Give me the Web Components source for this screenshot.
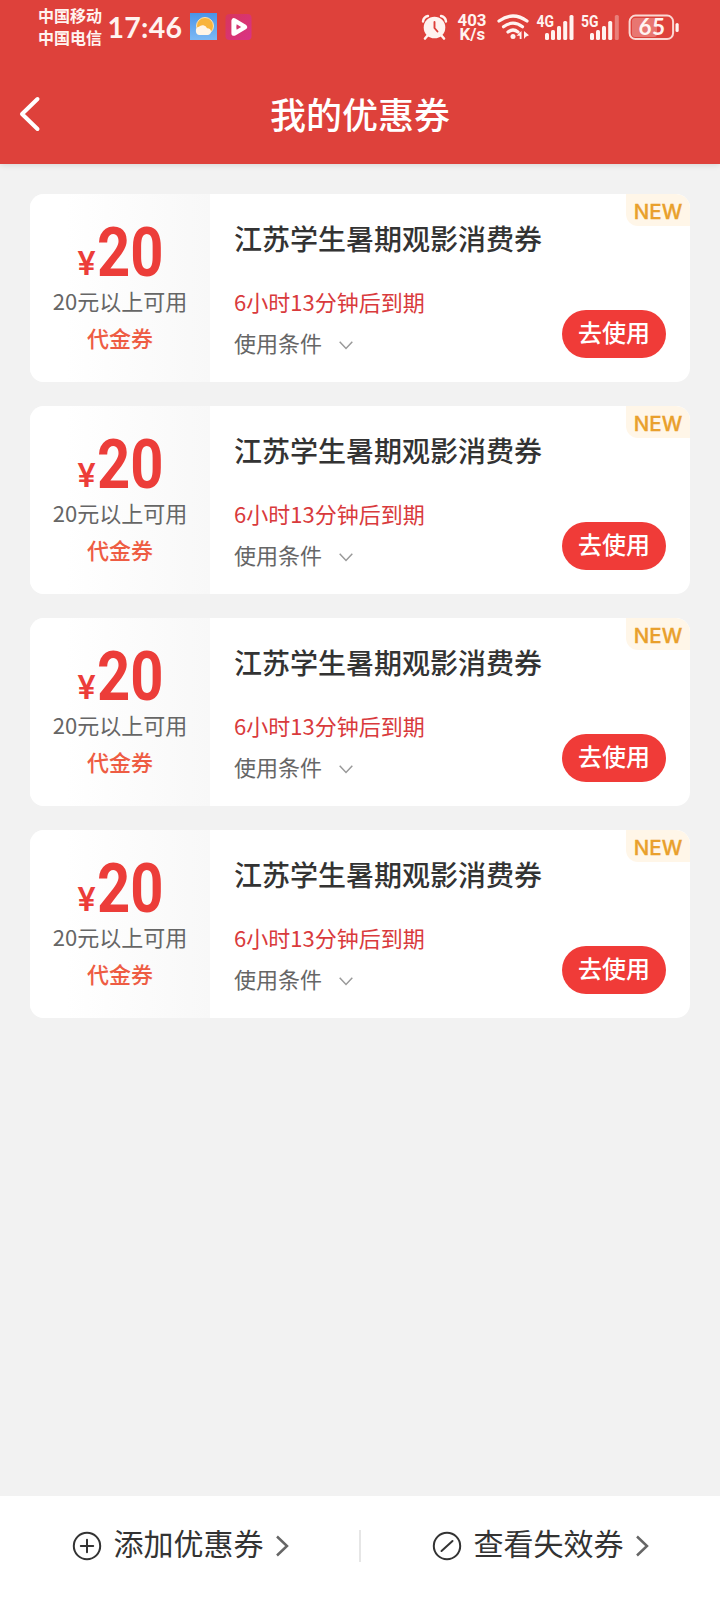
<!DOCTYPE html>
<html lang="zh-CN">
<head>
<meta charset="utf-8">
<title>我的优惠券</title>
<style>
html,body{margin:0;padding:0}
body{background:#f2f2f2;font-family:"Noto Sans CJK SC","Noto Sans",sans-serif;color:#333}
</style>
</head>
<body>
<coupon-page></coupon-page>
<script>
const define=(name,html,setup)=>customElements.define(name,class extends HTMLElement{
  constructor(){super();this.attachShadow({mode:'open'}).innerHTML=html;if(setup)setup(this.shadowRoot,this);}
});

define('status-bar',`
<style>
:host{display:flex;height:54px;color:#fff3f0;box-sizing:border-box;padding-left:38px}
svg{display:block;flex:none}
.carriers{width:66px;font-size:16px;font-weight:700;line-height:22px;padding-top:4px;white-space:nowrap}
text{fill:#fff3f0;font-family:Roboto,"Noto Sans",sans-serif;font-weight:700}
</style>
<div class="carriers"><div>中国移动</div><div>中国电信</div></div>
<svg width="84" height="54" viewBox="104 0 84 54"><text x="107.500" y="37.800" font-size="28.500" textLength="74.500" lengthAdjust="spacing" style="font-family:Lato,sans-serif">17:46</text></svg>
<svg width="66" height="54" viewBox="188 0 66 54">
  <defs>
    <linearGradient id="sky" x2="0" y2="1"><stop stop-color="#4b94e8"/><stop offset="1" stop-color="#7cb9f4"/></linearGradient>
    <linearGradient id="pink" x2="1" y2="1"><stop stop-color="#d8365b"/><stop offset="1" stop-color="#d93287"/></linearGradient>
  </defs>
  <rect x="190" y="13" width="27" height="27" fill="url(#sky)"/>
  <circle cx="205" cy="26" r="8.500" fill="#f8b43c" stroke="#fde3b4" stroke-width="1"/>
  <path d="M199.500 35a4.200 4.200 0 0 1-.6-8.200 5 5 0 0 1 8.200 1.400 3.500 3.500 0 0 1 3.900 3.300c0 2-1.500 3.500-3.500 3.500z" fill="#fff5e6"/>
  <rect x="225.500" y="14" width="26" height="26" rx="4" fill="url(#pink)"/>
  <path d="M234 20.800v12.400l10.500-6.200z" fill="#d43671" stroke="#fff" stroke-width="5.200" stroke-linejoin="round"/>
  <path d="M236.600 24.200v5.600l4.600-2.800z" fill="#d43671"/>
</svg>
<svg width="466" height="54" viewBox="254 0 466 54" fill="#fff3f0">
  <circle cx="434.500" cy="27.500" r="10.800"/>
  <path d="M423 21.500q.5-4.500 5-5.500M446 21.500q-.5-4.500-5-5.500" fill="none" stroke="#fff3f0" stroke-width="2.400" stroke-linecap="round"/>
  <path d="M428 35l-3 3.500M441 35l3 3.500" stroke="#fff3f0" stroke-width="2.600" stroke-linecap="round"/>
  <path d="M434.500 22v6l3 3.500" fill="none" stroke="#de413b" stroke-width="1.900" stroke-linecap="round"/>
  <text x="457.500" y="26" font-size="16.500" textLength="29" lengthAdjust="spacingAndGlyphs">403</text>
  <text x="459.500" y="40.300" font-size="16.500" textLength="25.500" lengthAdjust="spacingAndGlyphs">K/s</text>
  <g fill="none" stroke="#fff3f0" stroke-width="3.200" stroke-linecap="round">
    <path d="M499 21q14-10 28 0M503.500 26.700q9.500-7 19 0M508 32q5-4 10 0"/>
  </g>
  <circle cx="513" cy="36.500" r="2.500"/>
  <path d="M521.500 31v8h-1.800v-3.200h-3.200zM524 39v-8l5 4.200-3.200 1.500z"/>
  <text x="536.500" y="27" font-size="16.500" textLength="17.500" lengthAdjust="spacingAndGlyphs">4G</text>
  <text x="581" y="27" font-size="16.500" textLength="17.500" lengthAdjust="spacingAndGlyphs">5G</text>
  <rect x="545" y="33" width="4" height="7" rx="1.500"/><rect x="551" y="30" width="4" height="10" rx="1.500"/><rect x="557" y="26" width="4" height="14" rx="1.500"/><rect x="563.200" y="21" width="4" height="19" rx="1.500"/><rect x="569.500" y="15" width="4" height="25" rx="1.500"/>
  <rect x="590" y="33" width="4" height="7" rx="1.500"/><rect x="596" y="30" width="4" height="10" rx="1.500"/><rect x="602" y="26" width="4" height="14" rx="1.500"/><rect x="608.200" y="21" width="4" height="19" rx="1.500"/><rect x="614.800" y="15" width="4" height="25" rx="1.500" opacity=".35"/>
  <rect x="632" y="18" width="25" height="19" rx="3" opacity=".3"/>
  <rect x="629.600" y="15.600" width="43.500" height="23.500" rx="6" fill="none" stroke="#fff3f0" stroke-opacity=".85" stroke-width="2"/>
  <rect x="675.500" y="23" width="3.200" height="9" rx="1.600"/>
  <text x="638.500" y="35" font-size="22.500" textLength="26.500" lengthAdjust="spacing" style="font-family:Lato,sans-serif">65</text>
</svg>`);

define('nav-bar',`
<style>
:host{display:grid;grid-template-columns:60px 1fr 60px;align-items:center;height:110px;padding-top:10px;box-sizing:border-box;color:#fff}
h1{margin:-3px 0 0;font-size:36px;font-weight:500;line-height:100px;text-align:center}
svg{display:block;margin-left:18px}
</style>
<svg width="24" height="36" viewBox="0 0 24 36"><path d="M19.500 3L4 18l15.500 15" fill="none" stroke="#fff" stroke-width="4" stroke-linecap="round" stroke-linejoin="round"/></svg>
<h1><slot></slot></h1>`);

define('coupon-card',`
<style>
:host{display:flex;position:relative;height:188px;border-radius:14px;background:#fff;overflow:hidden}
.value{width:180px;flex:none;box-sizing:border-box;background:linear-gradient(90deg,#fff 20%,#f8f8f8);display:flex;flex-direction:column;align-items:center;padding-top:24px;font-size:22px;color:#666}
.amount{display:flex;align-items:baseline;height:70px;line-height:70px;color:#ec3d39;font-family:Roboto,sans-serif;font-weight:700}
.yen{display:block;width:20px;font-size:34px;font-weight:500;text-align:center;transform:translateY(-1px)}
.num{display:block;width:67px;font-size:69px;transform:scaleX(.84);transform-origin:0 50%}
.limit{line-height:24px;white-space:nowrap}
.kind{line-height:24px;margin-top:13px;color:#ee5c43;font-weight:500}
.body{flex:1;display:grid;grid-template-columns:1fr auto;padding:0 24px}
.info{padding-top:27px;white-space:nowrap;font-size:22px}
.name{font-size:28px;line-height:34px;color:#333;font-weight:500}
.expire{line-height:24px;margin-top:34px;color:#d93a3c}
.terms{display:flex;align-items:center;gap:17px;line-height:24px;margin-top:17px;color:#666}
.terms svg{margin-top:7px}
button{all:unset;box-sizing:border-box;align-self:end;margin-bottom:24px;width:104px;height:48px;border-radius:24px;background:#f03b38;color:#fff;font-size:24px;font-weight:500;line-height:24px;padding-bottom:5px;text-align:center}
.new{position:absolute;right:0;top:0;width:64px;height:32px;border-radius:0 14px 0 12px;background:#fff6e8;color:#e9a02c;font:500 20.500px/35px Inter,sans-serif;text-align:center;-webkit-text-stroke:.3px #e9a02c}
</style>
<div class="value">
  <div class="amount"><span class="yen">¥</span><span class="num"><slot name="amount"></slot></span></div>
  <div class="limit"><slot name="limit"></slot></div>
  <div class="kind"><slot name="kind"></slot></div>
</div>
<div class="body">
  <div class="info">
    <div class="name"><slot></slot></div>
    <div class="expire"><slot name="expire"></slot></div>
    <div class="terms"><span>使用条件</span><svg width="14" height="9" viewBox="0 0 14 9"><path d="M.7.8L7 7.500 13.300.8" fill="none" stroke="#999" stroke-width="1.500"/></svg></div>
  </div>
  <button>去使用</button>
</div>
<div class="new">NEW</div>`);

define('footer-action',`
<style>
:host{display:flex;align-items:center;justify-content:center;flex:1;height:99px;font-size:30px;line-height:44px;color:#333;white-space:nowrap}
.label{margin:-7px 12px 0 12px}
svg{display:block}
</style>
<svg width="30" height="30" viewBox="-15 -15 30 30" fill="none" stroke="#333" stroke-width="2" stroke-linecap="round"><circle r="13.200"/><path id="mark"/></svg>
<span class="label"><slot></slot></span>
<svg width="13" height="22" viewBox="0 0 13 22"><path d="M1 1.500l10 9.500-10 9.500" fill="none" stroke="#666" stroke-width="2.500"/></svg>`,
(root,host)=>root.getElementById('mark').setAttribute('d',host.getAttribute('icon')==='add'?'M-6.200 0H6.200M0-6.200V6.200':'M-5.500 5L5.500-5'));

define('coupon-page',`
<style>
:host{display:flex;flex-direction:column;height:1612px;width:720px;background:#f2f2f2}
header{height:164px;flex:none;background:#de413b;box-shadow:0 1px 6px rgba(0,0,0,.12)}
main{flex:1;display:flex;flex-direction:column;gap:24px;padding:30px 30px 0}
footer{height:116px;flex:none;display:flex;background:#fff}
.line{width:2px;height:32px;background:#e6e6e6;margin:34px -1px 0}
</style>
<header><status-bar></status-bar><nav-bar>我的优惠券</nav-bar></header>
<main></main>
<footer><footer-action icon="add">添加优惠券</footer-action><div class="line"></div><footer-action icon="expired">查看失效券</footer-action></footer>`,
root=>{root.querySelector('main').innerHTML=Array(4).fill('<coupon-card>江苏学生暑期观影消费券<span slot="amount">20</span><span slot="limit">20元以上可用</span><span slot="kind">代金券</span><span slot="expire">6小时13分钟后到期</span></coupon-card>').join('');});
</script>
</body>
</html>
